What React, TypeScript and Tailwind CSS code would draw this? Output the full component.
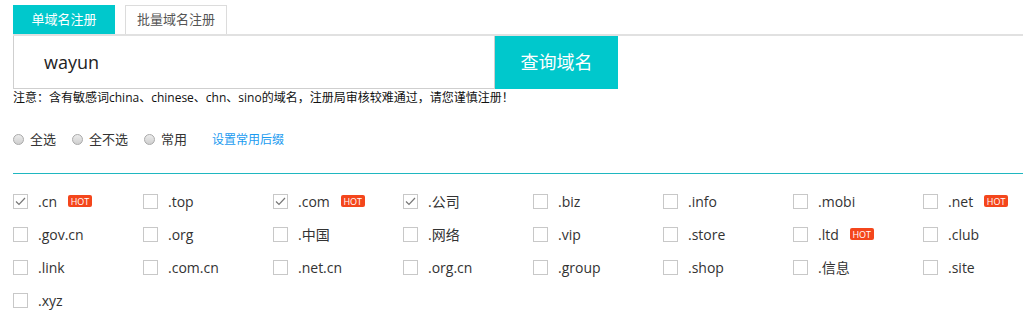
const domains: { name: string; checked?: boolean; hot?: boolean }[] = [
  { name: ".cn", checked: true, hot: true },
  { name: ".top" },
  { name: ".com", checked: true, hot: true },
  { name: ".公司", checked: true },
  { name: ".biz" },
  { name: ".info" },
  { name: ".mobi" },
  { name: ".net", hot: true },
  { name: ".gov.cn" },
  { name: ".org" },
  { name: ".中国" },
  { name: ".网络" },
  { name: ".vip" },
  { name: ".store" },
  { name: ".ltd", hot: true },
  { name: ".club" },
  { name: ".link" },
  { name: ".com.cn" },
  { name: ".net.cn" },
  { name: ".org.cn" },
  { name: ".group" },
  { name: ".shop" },
  { name: ".信息" },
  { name: ".site" },
  { name: ".xyz" },
];

function Radio({ label }: { label: string }) {
  return (
    <label className="flex items-center gap-[6px]">
      <span className="h-[11px] w-[11px] rounded-full border border-[#a9a9a9] bg-gradient-to-b from-[#ececec] to-[#cfcfcf]" />
      <span className="text-[13px] text-[#333]">{label}</span>
    </label>
  );
}

function Checkbox({ checked }: { checked?: boolean }) {
  return (
    <span className="flex h-[15px] w-[15px] shrink-0 items-center justify-center border border-[#c8c8c8] bg-white">
      {checked ? (
        <svg width="11" height="9" viewBox="0 0 11 9" fill="none">
          <path d="M1 4.5 L4 7.5 L10 1" stroke="#777" strokeWidth="1.2" />
        </svg>
      ) : null}
    </span>
  );
}

export default function App() {
  return (
    <div
      className="min-h-[324px] bg-white pl-[13px] pt-[5px]"
      style={{ fontFamily: '"Open Sans", "Noto Sans CJK SC", sans-serif' }}
    >
      <div className="flex gap-[10px] border-b-2 border-[#e1e1e1]">
        <div className="flex h-[29px] w-[102px] items-center justify-center bg-[#00c8cc] text-[13px] text-white">
          单域名注册
        </div>
        <div className="flex h-[29px] w-[102px] items-center justify-center border border-b-0 border-[#dcdcdc] text-[13px] text-[#555]">
          批量域名注册
        </div>
      </div>

      <div className="flex">
        <div className="flex h-[53px] w-[482px] items-center border-x border-b border-[#cfcfcf] pl-[30px] text-[18px] text-[#222]">
          wayun
        </div>
        <button className="h-[53px] w-[123px] bg-[#00c8cc] text-[18px] text-white">查询域名</button>
      </div>

      <p className="mt-px text-[12px] leading-[16px] text-[#111]">
        注意：含有敏感词china、chinese、chn、sino的域名，注册局审核较难通过，请您谨慎注册！
      </p>

      <div className="mt-[24px] flex items-center">
        <div className="flex items-center gap-[16px]">
          <Radio label="全选" />
          <Radio label="全不选" />
          <Radio label="常用" />
        </div>
        <a className="ml-[25px] text-[12px] text-[#1a9bf0]">设置常用后缀</a>
      </div>

      <div className="mt-[23px] border-t border-[#1fb7c0]" />

      <div className="mt-[20px] grid grid-cols-[repeat(8,130px)] gap-y-[18px]">
        {domains.map((d) => (
          <div key={d.name} className="flex h-[15px] items-center">
            <Checkbox checked={d.checked} />
            <span className="ml-[10px] text-[14px] text-[#333]">{d.name}</span>
            {d.hot ? (
              <span className="ml-[11px] flex h-[12px] w-[24px] items-center justify-center rounded-[2px] bg-[#f4461c] text-[9px] leading-none text-white">
                HOT
              </span>
            ) : null}
          </div>
        ))}
      </div>
    </div>
  );
}
